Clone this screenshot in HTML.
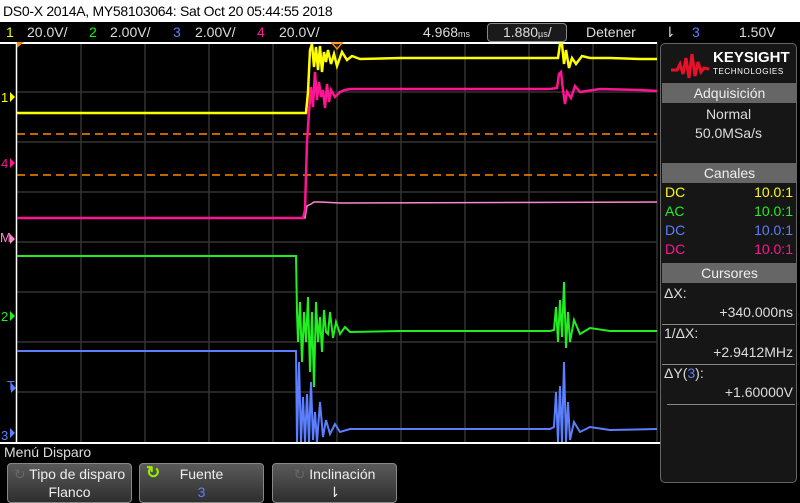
<!DOCTYPE html>
<html><head><meta charset="utf-8"><style>
*{margin:0;padding:0;box-sizing:border-box}
body{width:800px;height:503px;background:#000;position:relative;overflow:hidden;font-family:"Liberation Sans",sans-serif;color:#ddd}
.t{position:absolute;white-space:nowrap}
#top{position:absolute;left:0;top:0;width:800px;height:22px;background:#fff;color:#000;font-size:14px;line-height:22px;padding-left:3px;letter-spacing:-0.3px}
.hdr{position:absolute;top:22px;height:20px;font-size:14px;line-height:20px}
.panel{position:absolute;left:660px;top:43px;width:137px;height:440px;border:1px solid #666;border-radius:5px;background:#161616}
.ph{position:absolute;left:1px;width:135px;height:20px;background:#666;color:#eee;font-size:14px;text-align:center;line-height:20px}
.btn{position:absolute;top:463px;height:40px;border:1px solid #888;border-radius:4px;background:linear-gradient(#5a5a5a,#2e2e2e);font-size:14px;text-align:center;color:#eee;line-height:18px;padding-top:1px}
</style></head><body>
<div id="top">DS0-X 2014A, MY58103064: Sat Oct 20 05:44:55 2018</div>
<div class="hdr" style="left:6px;color:#ff0">1</div>
<div class="hdr" style="left:27px">20.0V/</div>
<div class="hdr" style="left:89px;color:#0f0">2</div>
<div class="hdr" style="left:110px">2.00V/</div>
<div class="hdr" style="left:173px;color:#5b7fff">3</div>
<div class="hdr" style="left:195px">2.00V/</div>
<div class="hdr" style="left:257px;color:#ff1493">4</div>
<div class="hdr" style="left:279px">20.0V/</div>
<div class="hdr" style="left:423px">4.968<span style="font-size:9px">ms</span></div>
<div style="position:absolute;left:487px;top:23px;width:80px;height:19px;border:1px solid #888;border-radius:4px;background:#1a1a1a"></div>
<div class="hdr" style="left:503px">1.880<span style="font-size:9px">µs</span>/</div>
<div class="hdr" style="left:586px">Detener</div>
<div class="hdr" style="left:664px">⇂</div>
<div class="hdr" style="left:692px;color:#5b7fff">3</div>
<div class="hdr" style="left:739px">1.50V</div>

<svg style="position:absolute;left:0;top:42px" width="660" height="404">
<g stroke="#333" stroke-width="1.5">
<line x1="81" y1="0" x2="81" y2="401"/><line x1="145" y1="0" x2="145" y2="401"/><line x1="209" y1="0" x2="209" y2="401"/><line x1="273" y1="0" x2="273" y2="401"/><line x1="337" y1="0" x2="337" y2="401"/><line x1="401" y1="0" x2="401" y2="401"/><line x1="465" y1="0" x2="465" y2="401"/><line x1="529" y1="0" x2="529" y2="401"/><line x1="593" y1="0" x2="593" y2="401"/><line x1="657" y1="0" x2="657" y2="401"/>
<line x1="16" y1="50" x2="657" y2="50"/><line x1="16" y1="100" x2="657" y2="100"/><line x1="16" y1="150" x2="657" y2="150"/><line x1="16" y1="200" x2="657" y2="200"/><line x1="16" y1="250" x2="657" y2="250"/><line x1="16" y1="300" x2="657" y2="300"/><line x1="16" y1="350" x2="657" y2="350"/>
</g>
<line x1="0" y1="1" x2="657" y2="1" stroke="#fff" stroke-width="2"/>
<line x1="16.5" y1="0" x2="16.5" y2="402" stroke="#fff" stroke-width="1.5"/>
<line x1="0" y1="401" x2="660" y2="401" stroke="#fff" stroke-width="2"/>
<g stroke="#f80" stroke-width="1.5" stroke-dasharray="8,5"><line x1="17" y1="92" x2="657" y2="92"/><line x1="17" y1="133" x2="657" y2="133"/></g>
<polygon points="17,0 24,0 17,6" fill="#f80"/>
<polygon points="332,1 342,1 337,7" fill="none" stroke="#f80" stroke-width="1.5"/>
<polyline fill="none" stroke="#f8c" stroke-width="1.5" points="17,176 305,176 307,164 311,162 314,160 320,160 340,161 657,160"/>
<polyline fill="none" stroke="#ff1493" stroke-width="2.5" points="17,176 303,176 305,168 307,100 309,70 311,45 313,65 315,30 317,58 319,40 321,55 323,48 325,66 327,42 329,60 331,48 335,55 340,50 345,48 350,47 400,47 550,47 557,46 559,32 561,30 563,48 565,62 567,50 571,56 575,44 580,50 600,47 640,48 657,49"/>
<polyline fill="none" stroke="#ff0" stroke-width="2.5" points="17,71 306,71 308,50 310,8 312,2 314,25 316,5 318,28 320,4 322,30 324,10 326,20 328,8 331,22 334,12 337,24 342,10 347,18 352,14 360,17 400,16 550,16 558,16 560,2 562,2 564,22 566,8 569,26 572,16 576,22 582,14 590,16 610,16 640,17 657,17"/>
<polyline fill="none" stroke="#2e2" stroke-width="2" points="17,214 296,214 297,270 298,300 300,260 302,320 304,270 306,300 308,255 310,330 312,270 314,345 316,260 318,300 320,275 322,310 324,268 326,290 328,292 330,270 333,296 336,280 340,292 345,285 350,290 400,289 550,289 554,288 556,265 558,300 560,258 562,295 564,240 566,306 568,270 570,300 574,278 580,292 590,286 610,289 657,289"/>
<polyline fill="none" stroke="#5b7fff" stroke-width="2" points="17,309 296,309 297,400 299,320 301,400 303,355 305,400 307,352 309,400 311,340 313,398 315,370 317,400 320,360 323,395 326,378 330,392 335,382 340,390 350,387 400,387 550,387 554,385 556,350 558,400 560,344 562,400 564,320 566,400 568,360 570,398 574,380 580,390 590,385 610,388 657,387"/>
<g font-size="13" font-family="Liberation Sans">
<text x="1" y="60" fill="#ff0">1</text><polygon points="10,50 15,55 10,60" fill="#ff0"/>
<text x="1" y="126" fill="#ff1493">4</text><polygon points="10,116 15,121 10,126" fill="#ff1493"/>
<text x="0" y="200" fill="#f8c">M</text><polygon points="10,192 15,197 10,202" fill="#f8c"/>
<text x="1" y="279" fill="#2e2">2</text><polygon points="10,269 15,274 10,279" fill="#2e2"/>
<text x="7" y="348" fill="#5b7fff">T</text><polygon points="11,341 16,346 11,351" fill="#5b7fff"/>
<text x="1" y="398" fill="#5b7fff">3</text><polygon points="10,386 15,391 10,396" fill="#5b7fff"/>
</g>
</svg>

<div class="panel">
<svg style="position:absolute;left:10px;top:8px" width="40" height="30"><polyline fill="none" stroke="#e8102a" stroke-width="3" points="0,18 6,18 9,12 12,22 15,6 18,26 21,2 24,24 27,10 30,20 33,16 38,17"/></svg>
<div class="t" style="left:52px;top:5px;font-size:15px;font-weight:bold;color:#fff">KEYSIGHT</div>
<div class="t" style="left:52px;top:23px;font-size:8px;color:#fff;letter-spacing:0.6px">TECHNOLOGIES</div>
<div class="ph" style="top:39px">Adquisición</div>
<div class="t" style="left:0;width:135px;text-align:center;top:62px;font-size:14px">Normal</div>
<div class="t" style="left:0;width:135px;text-align:center;top:81px;font-size:14px">50.0MSa/s</div>
<div class="ph" style="top:119px">Canales</div>
<div class="t" style="left:4px;top:140px;font-size:14px;color:#ff0">DC</div><div class="t" style="right:3px;top:140px;font-size:14px;color:#ff0">10.0:1</div>
<div class="t" style="left:4px;top:159px;font-size:14px;color:#2e2">AC</div><div class="t" style="right:3px;top:159px;font-size:14px;color:#2e2">10.0:1</div>
<div class="t" style="left:4px;top:178px;font-size:14px;color:#5b7fff">DC</div><div class="t" style="right:3px;top:178px;font-size:14px;color:#5b7fff">10.0:1</div>
<div class="t" style="left:4px;top:197px;font-size:14px;color:#ff1493">DC</div><div class="t" style="right:3px;top:197px;font-size:14px;color:#ff1493">10.0:1</div>
<div class="ph" style="top:219px">Cursores</div>
<div class="t" style="left:3px;top:241px;font-size:14px">ΔX:</div>
<div class="t" style="right:3px;top:260px;font-size:14px">+340.000ns</div>
<div style="position:absolute;left:1px;top:280px;width:133px;border-top:1px solid #888"></div>
<div class="t" style="left:3px;top:281px;font-size:14px">1/ΔX:</div>
<div class="t" style="right:3px;top:300px;font-size:14px">+2.9412MHz</div>
<div style="position:absolute;left:1px;top:320px;width:133px;border-top:1px solid #888"></div>
<div class="t" style="left:3px;top:321px;font-size:14px">ΔY(<span style="color:#5b7fff">3</span>):</div>
<div class="t" style="right:3px;top:340px;font-size:14px">+1.60000V</div>
<div style="position:absolute;left:6px;top:360px;width:128px;border-top:1px solid #888"></div>
</div>

<div class="t" style="left:4px;top:444px;font-size:14px;color:#ddd">Menú Disparo</div>
<div class="btn" style="left:7px;width:125px"><span style="color:#666">↻</span> Tipo de disparo<br>Flanco</div>
<div class="btn" style="left:139px;width:125px"><span style="color:#9e0;font-weight:bold;position:absolute;left:6px;top:0;font-size:17px">↻</span>Fuente<br><span style="color:#5b7fff">3</span></div>
<div class="btn" style="left:272px;width:125px"><span style="color:#666">↻</span> Inclinación<br>⇂</div>
</body></html>
